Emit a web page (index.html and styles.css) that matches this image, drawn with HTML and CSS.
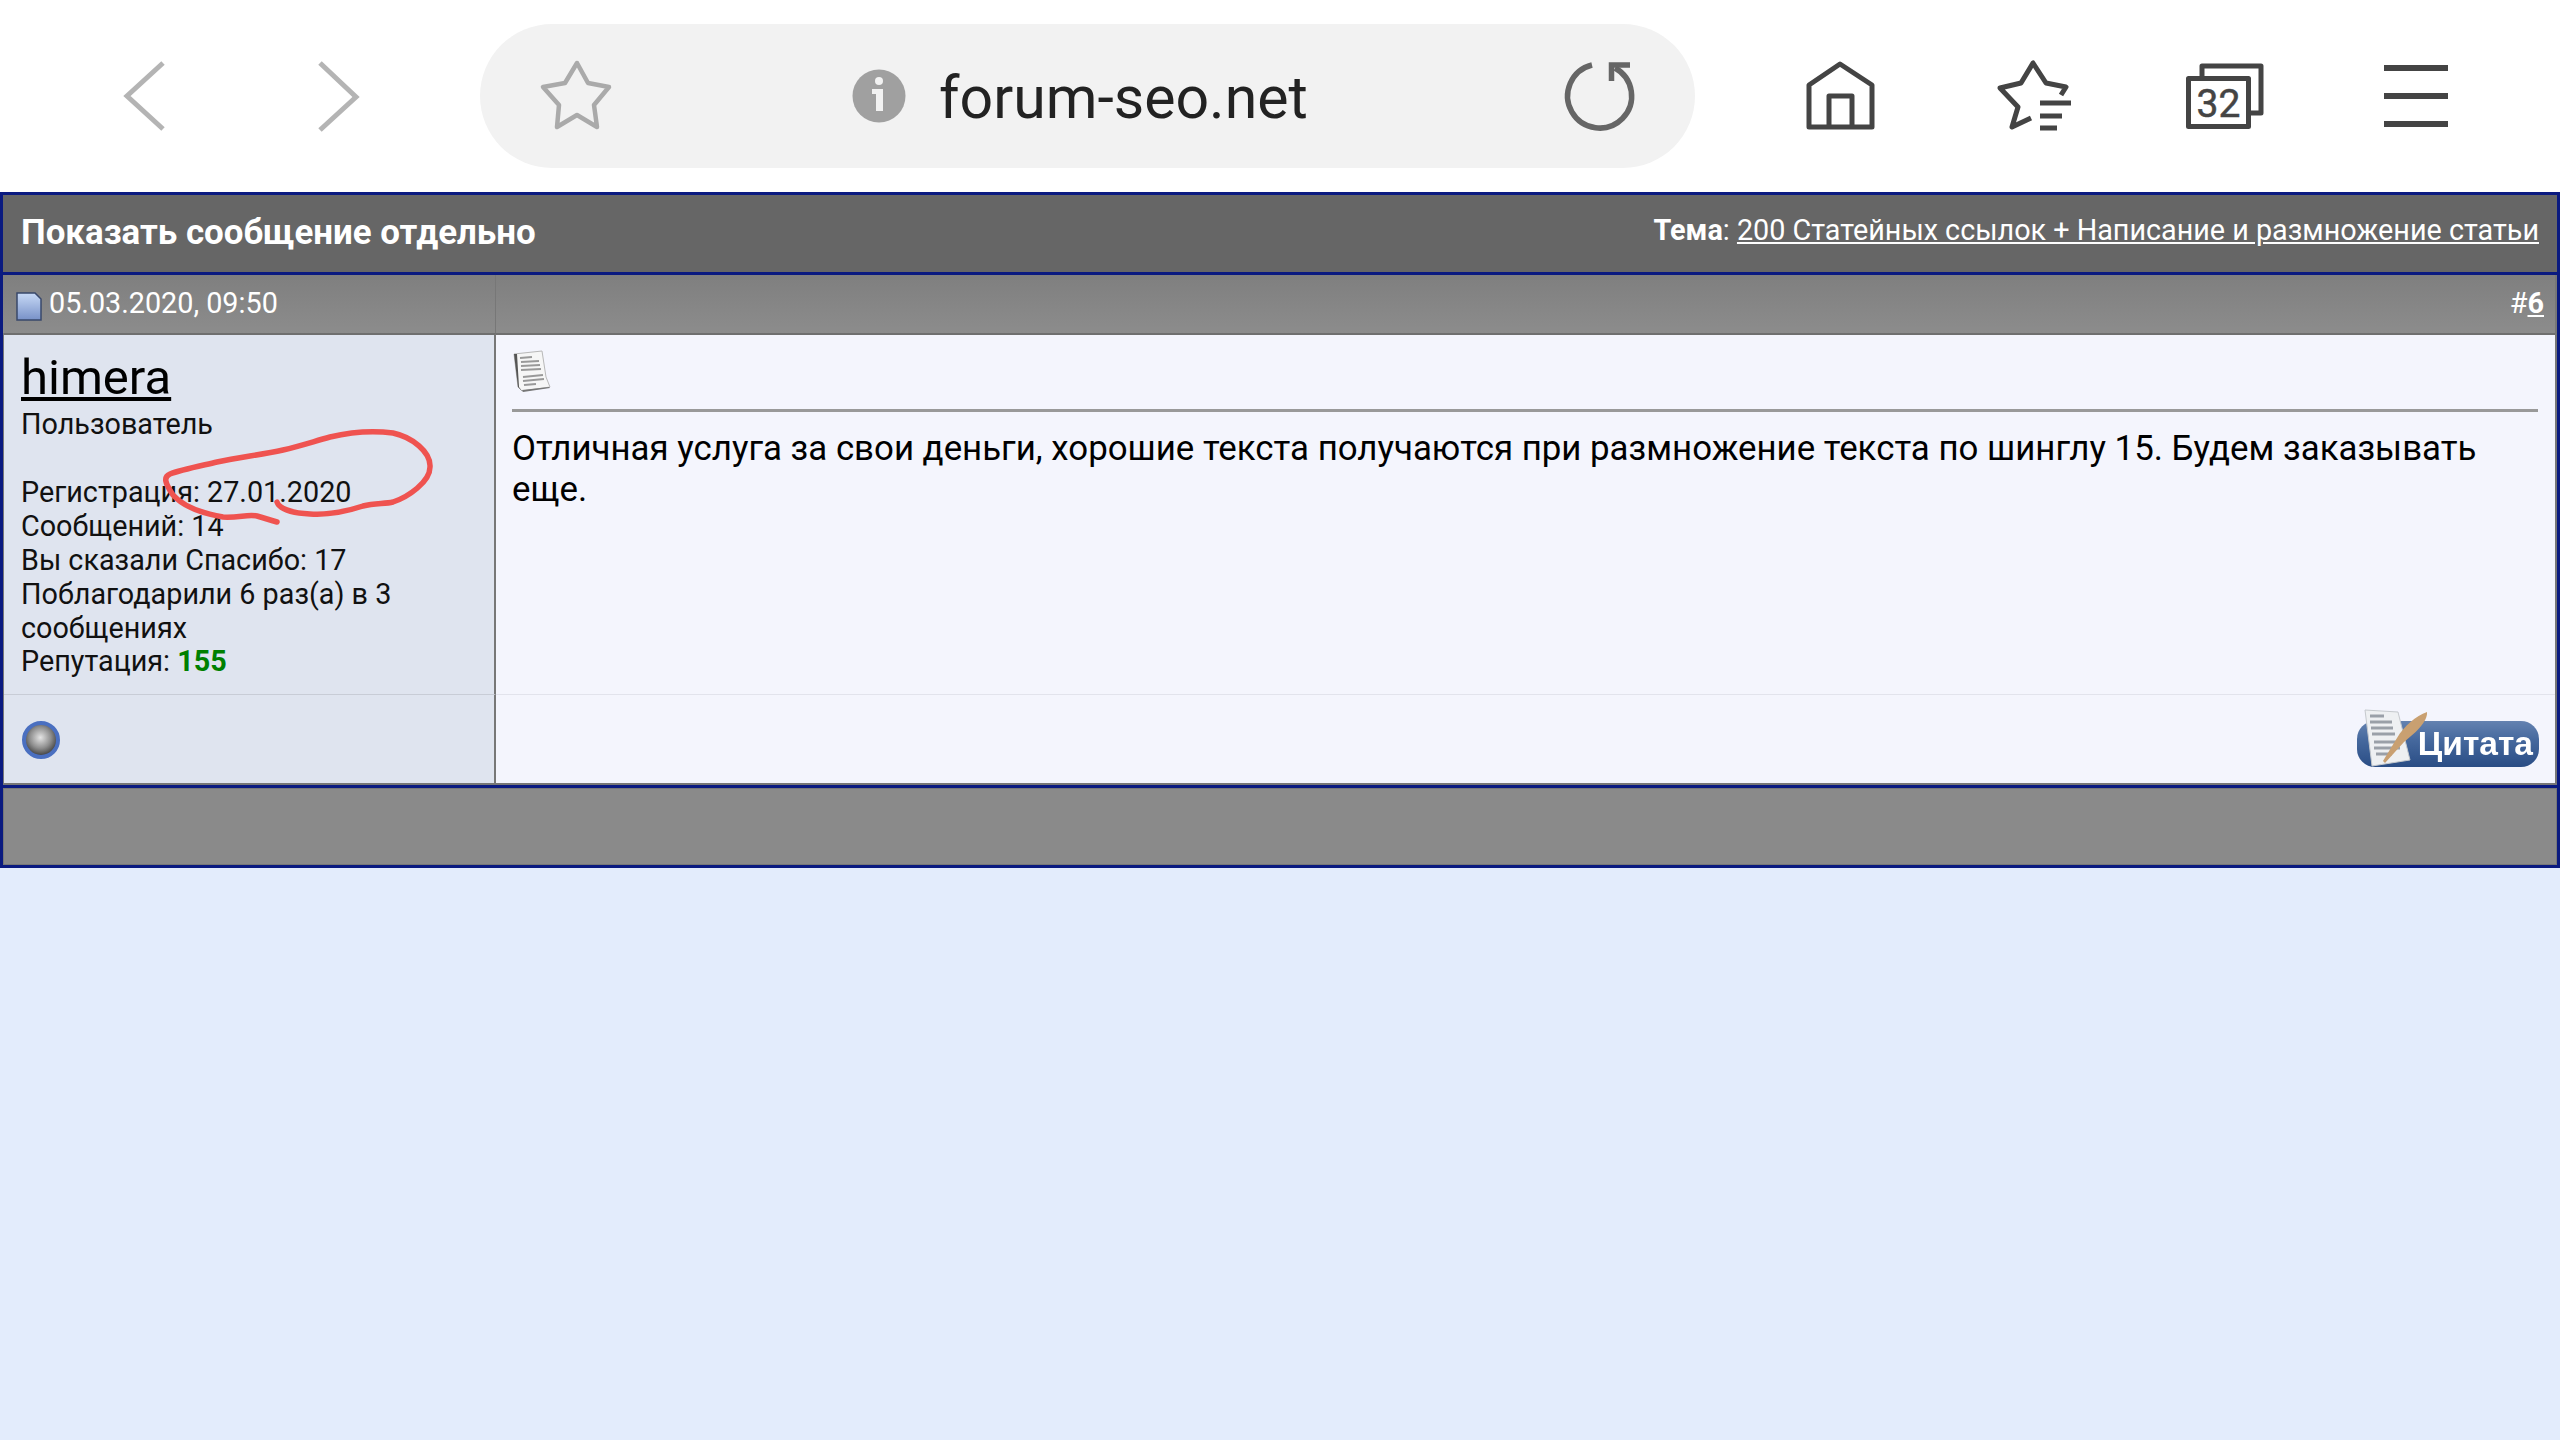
FILE: index.html
```html
<!DOCTYPE html>
<html lang="ru">
<head>
  <meta charset="UTF-8" />
  <title>Показать сообщение отдельно</title>
  <link rel="stylesheet" href="styles.css">
</head>
<body>

  <div class="toolbar">
    <svg class="icon nav-back" viewBox="0 0 80 80"><polyline class="nav-stroke" points="58,7 22,40 58,73"/></svg>
    <svg class="icon nav-forward" viewBox="0 0 80 80"><polyline class="nav-stroke" points="22,7 58,41 22,74"/></svg>

    <div class="address">
      <svg class="icon" viewBox="0 0 80 80"><polygon class="fav-star" points="41,7 52,27 73,31 58,49 61,71 41,59 21,71 23,49 7,31 29,27"/></svg>
      <div class="address-center">
        <svg class="info" viewBox="0 0 54 54">
          <circle cx="27" cy="27" r="26.5" fill="#a0a0a0"/>
          <circle cx="27" cy="12" r="4" fill="#f2f2f2"/>
          <path d="M20 20h11v22h-7V25h-4z" fill="#f2f2f2"/>
        </svg>
        <span class="url">forum-seo.net</span>
      </div>
      <svg class="icon" viewBox="0 0 80 80">
        <path class="reload" d="M32 9A32 32 0 1 0 55 12"/>
        <path class="reload" d="M70 9H51.500V25"/>
      </svg>
    </div>

    <svg class="icon tool-home" viewBox="0 0 80 80">
      <path class="tool-stroke" d="M40 8L9 29V71H72V29Z"/>
      <path class="tool-stroke" d="M29 71V40H52V71"/>
    </svg>
    <svg class="icon tool-next" viewBox="0 0 80 80">
      <path class="tool-stroke" d="M66 39L71 31L51 27L38 7L26 27L5 32L23 51L17 71L36 62"/>
      <path class="tool-bar" d="M45 47H76M45 60H67M45 72H62"/>
    </svg>
    <svg class="icon tool-next" viewBox="0 0 80 80">
      <path class="tool-stroke" d="M16 22V10H75V57H63"/>
      <rect class="tool-stroke" x="2.500" y="22.500" width="60" height="48"/>
      <text class="tab-count" x="32.500" y="61" text-anchor="middle">32</text>
    </svg>
    <svg class="icon tool-next" viewBox="0 0 80 80">
      <path class="tool-bar menu-bar" d="M7 12H71M7 40H71M7 68H71"/>
    </svg>
  </div>

  <div class="panel">
    <div class="panel-head">
      <span class="panel-title">Показать сообщение отдельно</span>
      <span class="panel-topic"><b>Тема</b>: <a href="#">200 Статейных ссылок + Написание и размножение статьи</a></span>
    </div>

    <div class="post">
      <div class="post-date">
        <svg class="post-icon" viewBox="0 0 26 29">
          <defs>
            <linearGradient id="postFill" x1="0" y1="0" x2="0" y2="1">
              <stop offset="0" stop-color="#c8daf6"/>
              <stop offset="1" stop-color="#7891c8"/>
            </linearGradient>
          </defs>
          <path d="M1 1H19L25 7V28H1Z" fill="url(#postFill)" stroke="#39486b" stroke-width="1.500"/>
        </svg>
        <span>05.03.2020, 09:50</span>
      </div>
      <div class="post-num">#<a href="#"><b>6</b></a></div>

      <div class="user-cell">
        <a class="username" href="#">himera</a>
        <div>Пользователь</div>
        <div class="user-info">
          Регистрация: 27.01.2020<br>
          Сообщений: 14<br>
          Вы сказали Спасибо: 17<br>
          Поблагодарили 6 раз(а) в 3 сообщениях<br>
          Репутация: <b class="rep">155</b>
        </div>
      </div>
      <div class="message-cell">
        <svg class="doc-icon" viewBox="0 0 40 44">
          <path d="M2 5L30 2L34 28L38 38L10 42L6 38Z" fill="#f6f6f6" stroke="#b8b8b8"/>
          <path d="M2 5L6 38L10 42L7 38L5 5Z" fill="#555"/>
          <path d="M10 41L37 38L38 39L11 43Z" fill="#777"/>
          <path d="M8 9L20 8M9 13L27 12M9 17L28 16M9 21L29 20M11 28L31 26M11 32L32 30M12 36L24 35" stroke="#999" stroke-width="2"/>
        </svg>
        <div class="message-rule"></div>
        <div class="message-text">Отличная услуга за свои деньги, хорошие текста получаются при размножение текста по шинглу 15. Будем заказывать еще.</div>
      </div>

      <div class="user-foot"><span class="online-dot"></span></div>
      <div class="message-foot">
        <a class="quote-btn" href="#">
          <svg class="quote-art" viewBox="0 0 70 60">
            <path d="M3 2L36 4L48 52L10 58Z" fill="#eef0f2" stroke="#c4c8cc"/>
            <path d="M8 8H22M8 14H30M9 20H31M10 26H33M12 34H36M12 40H38M14 46H30" stroke="#9aa0a8" stroke-width="3"/>
            <path d="M65 4C66 14 52 26 42 34L23 55L21 53L35 30C42 18 54 8 65 4Z" fill="#c9a071"/>
          </svg>
          <span class="quote-label">Цитата</span>
        </a>
      </div>
    </div>

    <div class="panel-foot"></div>
  </div>

  <!-- красная пометка поверх страницы -->
  <svg class="scribble" viewBox="150 420 300 120">
    <path d="M277 502C279 508 290 513 310 514C325 515 345 512 363 506C375 503 385 504 393 502C408 497 430 482 430 467C431 452 412 437 393 433C378 431 355 431 330 437C312 442 300 446 283 450C260 455 240 457 217 462C200 466 180 470 170 474C163 477 165 483 173 495C180 503 195 512 223 517C238 518 248 514 257 516C264 518 270 520 277 522"/>
  </svg>

</body>
</html>
```

FILE: styles.css
```css
body {
  margin: 0;
  height: 1440px;
  overflow: hidden;
  position: relative;
  background: #e3ecfc;
  font-family: Roboto, "Liberation Sans", sans-serif;
  font-size: 28.750px;
  color: #111;
}
a {
  color: inherit;
}

/* browser toolbar */
.toolbar {
  height: 192px;
  background: #fff;
  display: flex;
  align-items: center;
  padding-left: 105px;
  box-sizing: border-box;
}
.icon {
  width: 80px;
  height: 80px;
  flex: none;
}
.nav-back {
  margin-right: 113px;
}
.nav-stroke {
  fill: none;
  stroke: #b4b4b4;
  stroke-width: 5;
}
.address {
  width: 1215px;
  height: 144px;
  margin-left: 102px;
  margin-right: 105px;
  padding: 0 55px 0 56px;
  box-sizing: border-box;
  background: #f2f2f2;
  border-radius: 72px;
  display: flex;
  align-items: center;
  flex: none;
}
.address-center {
  flex: 1;
  display: flex;
  align-items: center;
  padding-left: 236px;
  gap: 33px;
}
.info {
  width: 54px;
  height: 54px;
}
.url {
  font-size: 59px;
  color: #222;
  padding-top: 2px;
}
.fav-star {
  fill: none;
  stroke: #aaa;
  stroke-width: 4.500;
  stroke-linejoin: round;
}
.reload {
  fill: none;
  stroke: #666;
  stroke-width: 5.500;
}
.tool-home {
  margin-right: 4px;
}
.tool-next {
  margin-left: 111px;
}
.tool-stroke {
  fill: none;
  stroke: #444;
  stroke-width: 5;
  stroke-linejoin: round;
}
.tool-bar {
  fill: none;
  stroke: #444;
  stroke-width: 5;
}
.menu-bar {
  stroke-width: 6;
}
.tab-count {
  font-size: 39px;
  fill: #444;
  stroke: #444;
  stroke-width: 0.500;
}

/* forum panel */
.panel {
  background: #0a1a80;
  padding: 3px;
  display: flex;
  flex-direction: column;
  gap: 3px;
}
.panel-head {
  height: 77px;
  background: #666;
  color: #fff;
  display: flex;
  justify-content: space-between;
  align-items: center;
  padding: 0 18px;
}
.panel-title {
  font-size: 34.900px;
  font-weight: bold;
  margin-bottom: 3px;
}
.panel-topic {
  font-size: 28.750px;
  margin-bottom: 7px;
}
.post {
  display: grid;
  grid-template-columns: 492px 1fr;
  grid-template-rows: 58px 361px 89px;
  background: #777;
  padding: 0 2px 2px 1px;
}
.post-date,
.post-num {
  background: linear-gradient(#7f7f7f, #8c8c8c);
  color: #fff;
  display: flex;
  align-items: center;
  padding-bottom: 2px;
}
.post-date {
  padding-left: 13px;
  gap: 7px;
  border-right: 1px solid #777;
  margin-left: -1px;
}
.post-num {
  justify-content: flex-end;
  padding-right: 11px;
}
.post-icon {
  width: 26px;
  height: 29px;
  margin-top: 7px;
}
.user-cell {
  background: #dfe4ef;
  border-top: 2px solid #6f6f6f;
  border-right: 2px solid #777;
  padding: 20px 0 0 17px;
  line-height: 33.900px;
}
.username {
  display: block;
  font-size: 49px;
  line-height: 46px;
  margin-bottom: 7px;
  color: #000;
}
.user-info {
  margin-top: 34px;
  width: 430px;
}
.rep {
  color: #008000;
}
.message-cell {
  background: #f4f5fd;
  border-top: 2px solid #6f6f6f;
  padding: 14px 17px 0 16px;
}
.doc-icon {
  display: block;
  width: 40px;
  height: 44px;
}
.message-rule {
  height: 3px;
  background: #999;
  margin-top: 16px;
}
.message-text {
  font-size: 34.830px;
  line-height: 41px;
  margin-top: 16px;
  color: #000;
}
.user-foot {
  background: #dfe4ef;
  border-top: 1px solid #c8ccd6;
  border-right: 2px solid #777;
  padding: 26px 0 0 18px;
}
.online-dot {
  display: block;
  width: 38px;
  height: 38px;
  box-sizing: border-box;
  border: 4px solid #4a6fc0;
  border-radius: 50%;
  background: radial-gradient(circle at 48% 42%, #e4e4e4, #8f8f8f 45%, #222 90%);
}
.message-foot {
  background: #f4f5fd;
  border-top: 1px solid #e2e3ec;
  display: flex;
  justify-content: flex-end;
  padding: 26px 16px 0 0;
}
.quote-btn {
  width: 182px;
  height: 46px;
  position: relative;
  box-sizing: border-box;
  border-radius: 18px;
  background: linear-gradient(#6482b0, #46699e 40%, #2a4d85);
  color: #fff;
  display: flex;
  align-items: center;
  justify-content: flex-end;
  padding-right: 6px;
  text-decoration: none;
  filter: blur(0.700px);
}
.quote-art {
  position: absolute;
  left: 5px;
  top: -13px;
  width: 70px;
  height: 60px;
}
.quote-label {
  font-family: "Liberation Sans", Arial, sans-serif;
  font-weight: bold;
  font-size: 33.500px;
}
.panel-foot {
  height: 75px;
  background: #8a8a8a;
  border: 1px solid #777;
}

.scribble {
  position: absolute;
  left: 150px;
  top: 420px;
  width: 300px;
  height: 120px;
  fill: none;
  stroke: #ef5350;
  stroke-width: 5.500;
  stroke-linecap: round;
}
```
